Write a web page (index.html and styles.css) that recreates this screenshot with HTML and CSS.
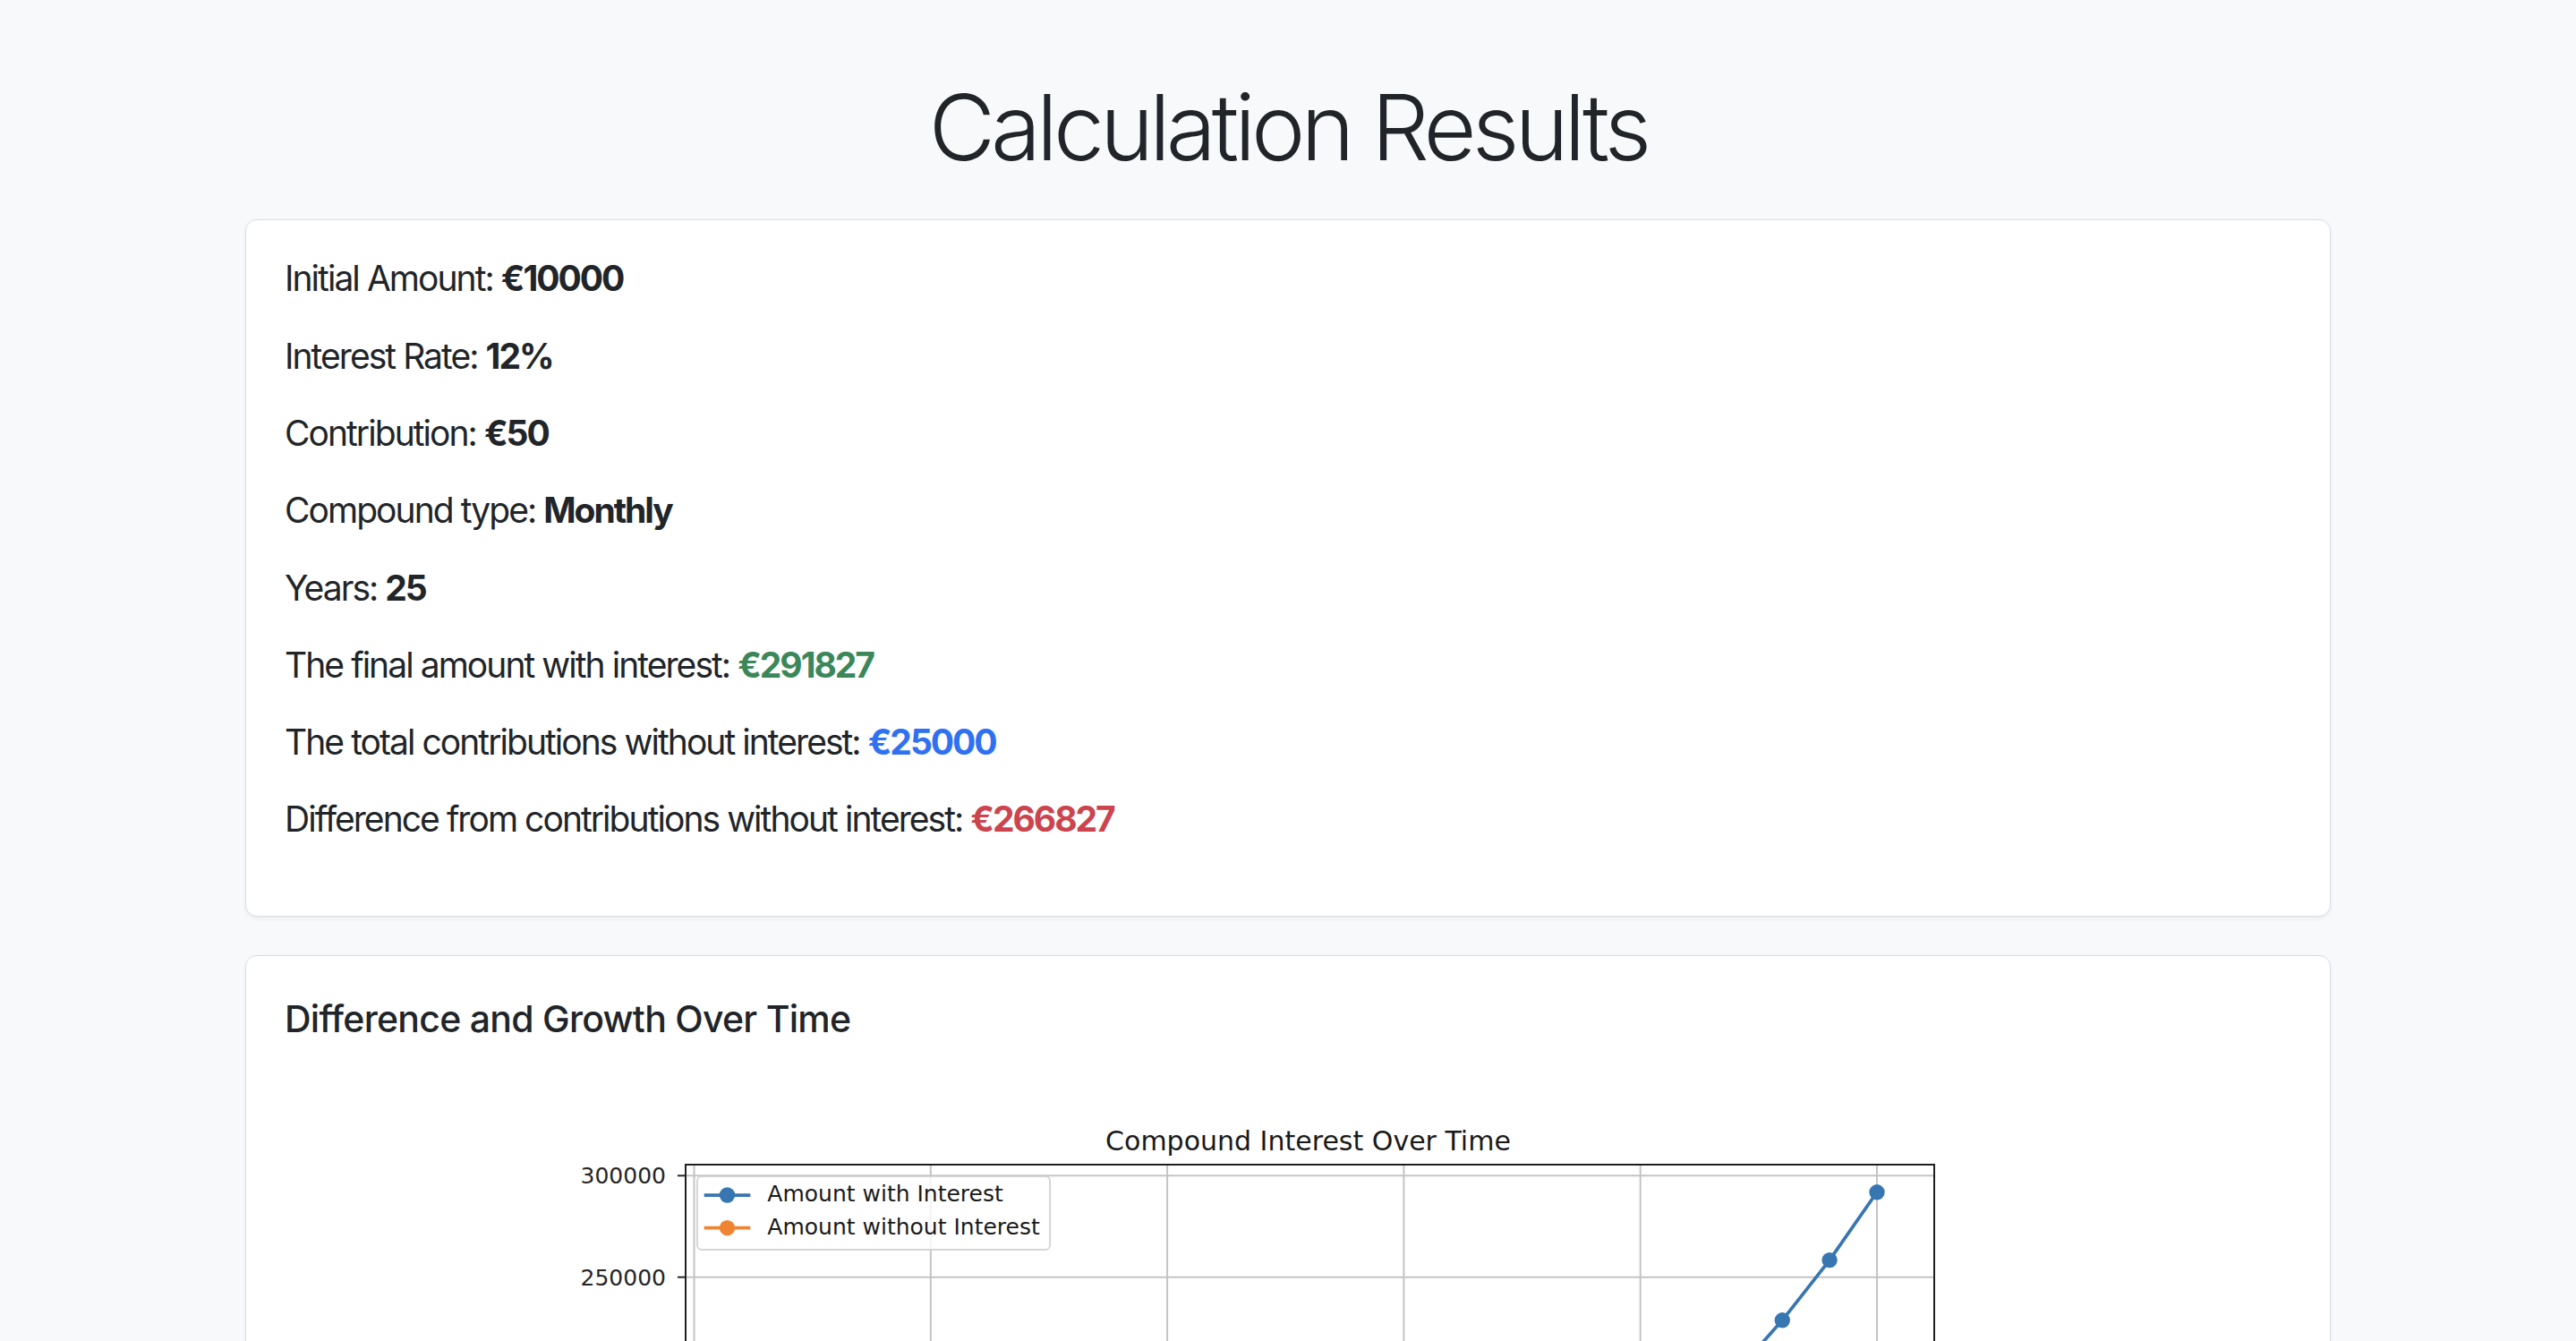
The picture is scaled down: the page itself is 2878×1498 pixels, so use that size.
FILE: index.html
```html
<!DOCTYPE html>
<html lang="en">
<head>
<meta charset="utf-8">
<title>Calculation Results</title>
<link rel="stylesheet" href="styles.css">
</head>
<body>
<main class="container">
  <h1 class="page-title">Calculation Results</h1>

  <section class="card">
    <div class="card-body">
      <p>Initial Amount: <strong>€10000</strong></p>
      <p>Interest Rate: <strong>12%</strong></p>
      <p>Contribution: <strong>€50</strong></p>
      <p>Compound type: <strong>Monthly</strong></p>
      <p>Years: <strong>25</strong></p>
      <p>The final amount with interest: <strong class="val-green">€291827</strong></p>
      <p>The total contributions without interest: <strong class="val-blue">€25000</strong></p>
      <p>Difference from contributions without interest: <strong class="val-red">€266827</strong></p>
    </div>
  </section>

  <section class="card chart-card">
    <div class="card-body">
      <h5 class="card-title">Difference and Growth Over Time</h5>
      <svg class="chart" viewBox="0 0 1800 910" width="1800" height="910" xmlns="http://www.w3.org/2000/svg">
        <defs>
          <marker id="dot-blue" markerUnits="userSpaceOnUse" markerWidth="20" markerHeight="20" refX="10" refY="10">
            <circle cx="10" cy="10" r="8.7" fill="#3776b1"/>
          </marker>
          <marker id="dot-orange" markerUnits="userSpaceOnUse" markerWidth="20" markerHeight="20" refX="10" refY="10">
            <circle cx="10" cy="10" r="8.7" fill="#ef8533"/>
          </marker>
        </defs>
        <rect x="0" y="0" width="1800" height="910" fill="#ffffff"/>

        <text class="plot-title" x="922.5" y="92" text-anchor="middle">Compound Interest Over Time</text>

        <g class="grid">
          <line x1="236.5" y1="108" x2="236.5" y2="808"/>
          <line x1="500.8" y1="108" x2="500.8" y2="808"/>
          <line x1="765.1" y1="108" x2="765.1" y2="808"/>
          <line x1="1029.4" y1="108" x2="1029.4" y2="808"/>
          <line x1="1293.7" y1="108" x2="1293.7" y2="808"/>
          <line x1="1558" y1="108" x2="1558" y2="808"/>
          <line x1="227" y1="120.3" x2="1622" y2="120.3"/>
          <line x1="227" y1="233.7" x2="1622" y2="233.7"/>
          <line x1="227" y1="347.1" x2="1622" y2="347.1"/>
          <line x1="227" y1="460.5" x2="1622" y2="460.5"/>
          <line x1="227" y1="573.9" x2="1622" y2="573.9"/>
          <line x1="227" y1="687.3" x2="1622" y2="687.3"/>
          <line x1="227" y1="800.7" x2="1622" y2="800.7"/>
        </g>

        <g class="ticks">
          <line x1="218" y1="120.3" x2="227" y2="120.3"/>
          <line x1="218" y1="233.7" x2="227" y2="233.7"/>
          <line x1="218" y1="347.1" x2="227" y2="347.1"/>
          <line x1="218" y1="460.5" x2="227" y2="460.5"/>
          <line x1="218" y1="573.9" x2="227" y2="573.9"/>
          <line x1="218" y1="687.3" x2="227" y2="687.3"/>
          <line x1="218" y1="800.7" x2="227" y2="800.7"/>
          <line x1="236.5" y1="808" x2="236.5" y2="817"/>
          <line x1="500.8" y1="808" x2="500.8" y2="817"/>
          <line x1="765.1" y1="808" x2="765.1" y2="817"/>
          <line x1="1029.4" y1="808" x2="1029.4" y2="817"/>
          <line x1="1293.7" y1="808" x2="1293.7" y2="817"/>
          <line x1="1558" y1="808" x2="1558" y2="817"/>
        </g>

        <g class="tick-label" text-anchor="end">
          <text x="205" y="129.3">300000</text>
          <text x="205" y="242.7">250000</text>
          <text x="205" y="356.1">200000</text>
          <text x="205" y="469.5">150000</text>
          <text x="205" y="582.9">100000</text>
          <text x="205" y="696.3">50000</text>
          <text x="205" y="809.7">0</text>
        </g>
        <g class="tick-label" text-anchor="middle">
          <text x="236.5" y="844">0</text>
          <text x="500.8" y="844">5</text>
          <text x="765.1" y="844">10</text>
          <text x="1029.4" y="844">15</text>
          <text x="1293.7" y="844">20</text>
          <text x="1558" y="844">25</text>
        </g>
        <text class="tick-label" x="924.5" y="884" text-anchor="middle">Years</text>
        <text class="tick-label" x="0" y="0" text-anchor="middle" transform="translate(110 458) rotate(-90)">Amount (€)</text>

        <polyline class="series series-blue" marker-start="url(#dot-blue)" marker-mid="url(#dot-blue)" marker-end="url(#dot-blue)"
          points="289.4,773.7 342.2,768.8 395.1,763.4 447.9,757.2 500.8,750.2 553.7,742.4 606.5,733.6 659.4,723.6 712.2,712.4 765.1,699.8 818,685.5 870.8,669.5 923.7,651.4 976.5,631 1029.4,608.1 1082.3,582.2 1135.1,553 1188,520.2 1240.8,483.2 1293.7,441.5 1346.6,394.5 1399.4,341.5 1452.3,281.8 1505.1,214.6 1558,138.8"/>
        <polyline class="series series-orange" marker-start="url(#dot-orange)" marker-mid="url(#dot-orange)" marker-end="url(#dot-orange)"
          points="289.4,776.6 342.2,775.3 395.1,773.9 447.9,772.6 500.8,771.2 553.7,769.8 606.5,768.5 659.4,767.1 712.2,765.8 765.1,764.4 818,763 870.8,761.7 923.7,760.3 976.5,758.9 1029.4,757.6 1082.3,756.2 1135.1,754.9 1188,753.5 1240.8,752.1 1293.7,750.8 1346.6,749.4 1399.4,748.1 1452.3,746.7 1505.1,745.3 1558,744"/>

        <rect class="frame" x="227" y="108" width="1395" height="700"/>

        <g class="legend">
          <rect class="legend-box" x="240" y="121" width="394" height="82" rx="5" ry="5"/>
          <line class="series series-blue" x1="247.7" y1="142" x2="299.3" y2="142"/>
          <circle cx="273.5" cy="142" r="8.7" fill="#3776b1"/>
          <text class="legend-label" x="318.3" y="149.3">Amount with Interest</text>
          <line class="series series-orange" x1="247.7" y1="178.7" x2="299.3" y2="178.7"/>
          <circle cx="273.5" cy="178.7" r="8.7" fill="#ef8533"/>
          <text class="legend-label" x="318.3" y="186">Amount without Interest</text>
        </g>
      </svg>
    </div>
  </section>
</main>
</body>
</html>
```

FILE: styles.css
```css
html, body {
  margin: 0;
  padding: 0;
}

body {
  background: #f8f9fa;
  color: #212529;
  font-family: Inter, "Noto Sans", "Liberation Sans", sans-serif;
}

.container {
  width: 2330px;
  margin: 0 auto;
  padding-top: 81px;
}

.page-title {
  margin: 0 0 42px;
  text-align: center;
  font-size: 102px;
  font-weight: 300;
  line-height: 1.2;
  letter-spacing: -0.049em;
}

.card {
  background: #ffffff;
  border: 1px solid #dcdddf;
  border-radius: 13px;
  box-shadow: 0 2px 5px rgba(0, 0, 0, 0.06);
  margin-bottom: 43px;
}

.card-body {
  padding: 43px 43px 43px;
}

.card-body p {
  margin: 0 0 42.3px;
  font-size: 39px;
  line-height: 44px;
  letter-spacing: -0.05em;
}

.card-body strong {
  font-weight: 700;
  letter-spacing: -0.052em;
}

.val-green { color: #3c875a; }
.val-blue { color: #3071f2; }
.val-red { color: #cc444d; }

.card-title {
  margin: 3px 0 30px;
  font-size: 41px;
  font-weight: 500;
  line-height: 49px;
  letter-spacing: -0.018em;
}

.chart {
  display: block;
  margin: 0 auto;
}

.chart .plot-title {
  font-family: "DejaVu Sans", sans-serif;
  font-size: 30px;
  fill: #1a1a1a;
}

.chart .grid line {
  stroke: #c4c4c4;
  stroke-width: 2;
}

.chart .ticks line {
  stroke: #262626;
  stroke-width: 2;
}

.chart .tick-label {
  font-family: "DejaVu Sans", sans-serif;
  font-size: 25px;
  fill: #262626;
}

.chart .series {
  fill: none;
  stroke-width: 3.75;
  stroke-linejoin: round;
}

.chart .series-blue { stroke: #3776b1; }
.chart .series-orange { stroke: #ef8533; }

.chart .frame {
  fill: none;
  stroke: #1f1f1f;
  stroke-width: 2;
}

.chart .legend-box {
  fill: #ffffff;
  fill-opacity: 0.8;
  stroke: #cccccc;
  stroke-opacity: 0.8;
  stroke-width: 2;
}

.chart .legend-label {
  font-family: "DejaVu Sans", sans-serif;
  font-size: 25px;
  fill: #1a1a1a;
}
```
